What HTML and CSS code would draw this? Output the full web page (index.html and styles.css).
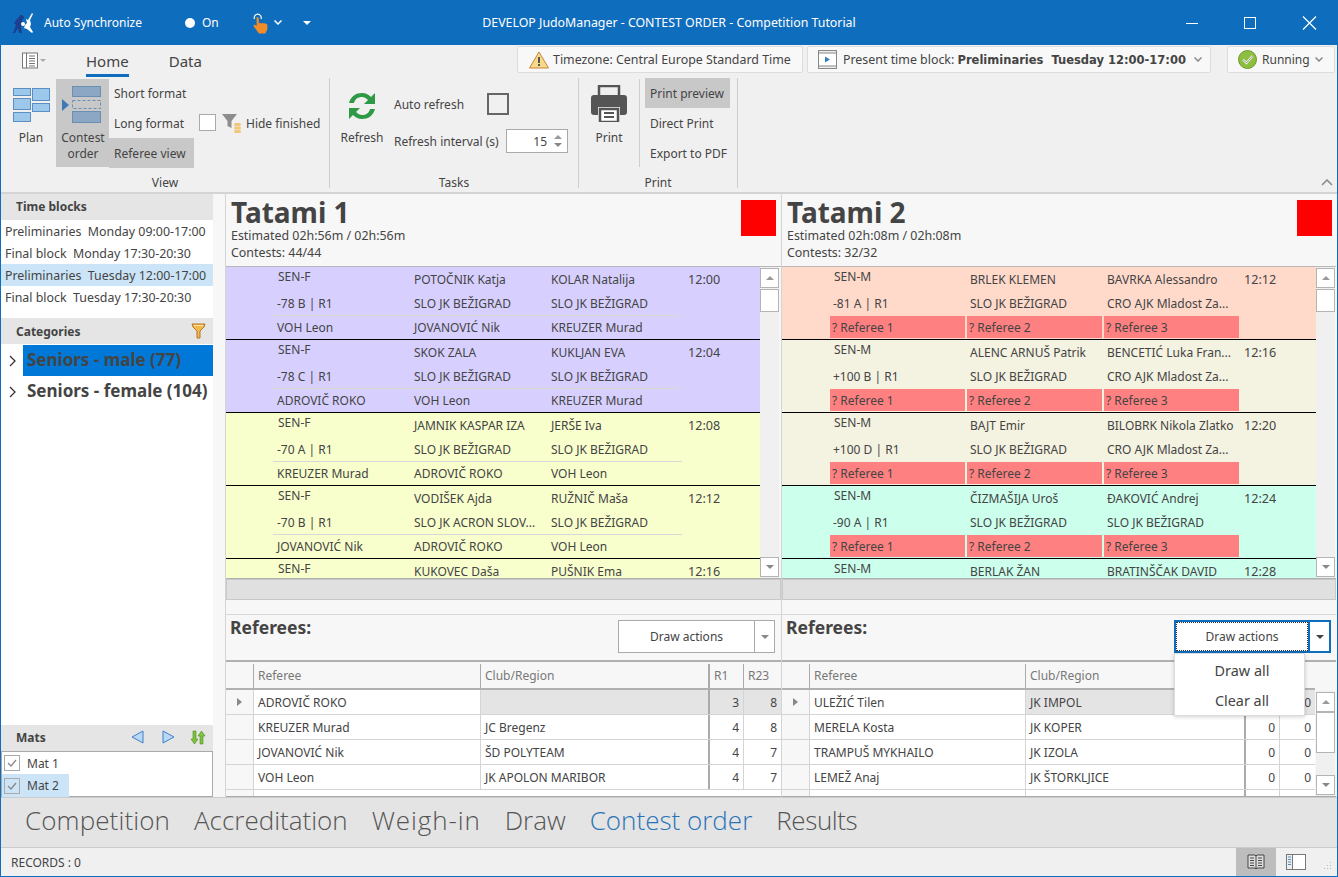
FILE: index.html
```html
<!DOCTYPE html>
<html lang="en">
<head>
<meta charset="utf-8">
<title>JudoManager</title>
<link rel="stylesheet" href="styles.css">
</head>
<body>
<div class="window">
  <header class="titlebar">
    <div class="tb-left">
      <svg class="logo" viewBox="0 0 22 22" width="22" height="22"><path d="M7 5a2.500 2.500 0 1 1 3 3l1 3-2 4 1 6H7l-1-5-3 5H1l3-8-2-2 3-4z" fill="#1d3f8f"/><path d="M20 1l1 1-3 6 1 4-1 3 3 5-1 1-5-4-3-1 1-3 2-2-1-4 2 1z" fill="#fff"/><circle cx="11" cy="12" r="2" fill="#fff"/></svg>
      <span class="tb-sync">Auto Synchronize</span>
      <span class="tb-dot"></span><span class="tb-on">On</span>
      <svg class="tb-hand" viewBox="0 0 18 22" width="18" height="22"><path d="M2.500 7a3.500 3.500 0 1 1 6.500 0" fill="none" stroke="#fff" stroke-width="1.200"/><path d="M4.500 5.500c1.200-.8 2.300 0 2.300 1.200v4.800l1.500-.7 1.200.6 1.300-.5 1.200.7 1.300-.3 2 1.300v5l-2 4H7l-5.500-7.500c0-1.500 1.500-1.700 2.600-.7l.6.700z" fill="#f28c28"/></svg>
      <svg class="tb-chev" viewBox="0 0 8 5" width="8" height="5"><path d="M.5.500 4 4 7.500.500" fill="none" stroke="#fff" stroke-width="1.500"/></svg>
      <span class="tb-caret"></span>
    </div>
    <div class="tb-title">DEVELOP JudoManager - CONTEST ORDER - Competition Tutorial</div>
    <div class="tb-controls">
      <svg viewBox="0 0 12 12" width="12" height="12"><path d="M0 6.500h12" stroke="#fff"/></svg>
      <svg viewBox="0 0 12 12" width="12" height="12"><rect x=".5" y=".5" width="11" height="11" fill="none" stroke="#fff"/></svg>
      <svg viewBox="0 0 15 14" width="15" height="14"><path d="M1 .5l13 13M14 .5l-13 13" stroke="#fff" stroke-width="1.200"/></svg>
    </div>
  </header>

  <section class="ribbon">
    <div class="rb-top">
      <svg class="rb-menu" viewBox="0 0 26 17" width="26" height="17"><rect x="1.500" y="1" width="15" height="15" fill="#fff" stroke="#777"/><path d="M5.500 1v15" stroke="#777"/><path d="M8 4h6M8 6.500h6M8 9h6M8 11.500h6M8 14h6" stroke="#777"/><path d="M19 7h6l-3 3z" fill="#aaa"/></svg>
      <div class="rb-tab rb-tab-on">Home</div>
      <div class="rb-tab">Data</div>
      <div class="rb-status">
        <div class="rb-pill rb-tz">
          <svg viewBox="0 0 20 18" width="20" height="18"><path d="M10 1 19.500 17H.5z" fill="#f7d98a" stroke="#c9843a"/><path d="M10 6v6" stroke="#555" stroke-width="2"/><path d="M10 13v2" stroke="#555" stroke-width="2"/></svg>
          <span>Timezone: Central Europe Standard Time</span>
        </div>
        <div class="rb-pill rb-block">
          <svg viewBox="0 0 19 19" width="19" height="19"><rect x=".5" y=".5" width="18" height="18" fill="#eee" stroke="#888"/><rect x=".5" y="3" width="18" height="13" fill="#fff" stroke="#888"/><path d="M7 6.500v6l5-3z" fill="#3a7cc0"/></svg>
          <span>Present time block: <b>Preliminaries&nbsp; Tuesday 12:00-17:00</b></span>
          <svg class="chev" viewBox="0 0 8 5" width="8" height="5"><path d="M.5.500 4 4 7.500.500" fill="none" stroke="#888" stroke-width="1.500"/></svg>
        </div>
        <div class="rb-pill rb-run">
          <svg viewBox="0 0 19 19" width="19" height="19"><circle cx="9.500" cy="9.500" r="9" fill="#8cbf3f" stroke="#6c9a2a"/><path d="M5 9.500l3.500 3.500 6-7" fill="none" stroke="#fff" stroke-width="2"/><path d="M5 9.500l3.500 3.500 6-7" fill="none" stroke="#666" stroke-width=".7"/></svg>
          <span>Running</span>
          <svg class="chev" viewBox="0 0 8 5" width="8" height="5"><path d="M.5.500 4 4 7.500.500" fill="none" stroke="#888" stroke-width="1.500"/></svg>
        </div>
      </div>
    </div>
    <div class="rb-groups">
      <div class="rb-group g-view">
        <div class="rb-items">
          <div class="rb-large b-plan">
            <svg viewBox="0 0 37 34" width="37" height="34"><g fill="#9cc8ec" stroke="#5b8fc4"><rect x=".5" y=".5" width="17" height="7"/><rect x=".5" y="10.500" width="17" height="11"/><rect x=".5" y="24.500" width="17" height="9"/><rect x="19.500" y=".5" width="17" height="12"/><rect x="19.500" y="15.500" width="17" height="8"/></g></svg>
            <span>Plan</span>
          </div>
          <div class="rb-large b-order">
            <svg viewBox="0 0 42 37" width="42" height="37"><path d="M0 13l7 6-7 6z" fill="#3f7ab5"/><g fill="#8ba7c4" stroke="#6b8fb3"><rect x="10.500" y=".5" width="28" height="10"/><rect x="10.500" y="25.500" width="28" height="11"/></g><rect x="10.500" y="14.500" width="28" height="8" fill="none" stroke="#6b8fb3" stroke-dasharray="3 2"/></svg>
            <span>Contest<br>order</span>
          </div>
          <div class="rb-small-col c-format">
            <div class="rb-small">Short format</div>
            <div class="rb-small">Long format</div>
            <div class="rb-small is-on">Referee view</div>
          </div>
          <div class="hide-finished">
            <span class="chk"></span>
            <svg viewBox="0 0 20 20" width="20" height="20"><path d="M0 1h15l-5.500 7v7l-4-2V8z" fill="#8d8d8d"/><rect x="12" y="10" width="7" height="3" rx="1.500" fill="#f2c777"/><rect x="12" y="13.500" width="7" height="3" rx="1.500" fill="#f2c777"/><rect x="12" y="17" width="7" height="3" rx="1.500" fill="#f2c777"/></svg>
            <span>Hide finished</span>
          </div>
        </div>
        <div class="rb-glabel">View</div>
      </div>
      <div class="rb-group g-tasks">
        <div class="rb-items">
          <div class="rb-large b-refresh">
            <svg viewBox="0 0 32 32" width="32" height="32"><path d="M3 13C5 6 10 3 16 3c4 0 7 2 9 4l4-4v11H18l4-4c-2-2-4-3-6-3-4 0-7 2-8 6z" fill="#2f9a46"/><path d="M29 19c-2 7-7 10-13 10-4 0-7-2-9-4l-4 4V18h11l-4 4c2 2 4 3 6 3 4 0 7-2 8-6z" fill="#2f9a46"/></svg>
            <span>Refresh</span>
          </div>
          <div class="task-form">
            <div class="task-row1"><span>Auto refresh</span><span class="chk-big"></span></div>
            <div class="task-row2"><span>Refresh interval (s)</span>
              <span class="spin"><span class="spin-val">15</span><span class="spin-btns"><i class="up"></i><i class="down"></i></span></span>
            </div>
          </div>
        </div>
        <div class="rb-glabel">Tasks</div>
      </div>
      <div class="rb-group g-print">
        <div class="rb-items">
          <div class="rb-large b-print">
            <svg viewBox="0 0 36 37" width="36" height="37"><path d="M8 1h20v11H8z" fill="none" stroke="#555" stroke-width="2.500"/><path d="M3 10h30a3 3 0 0 1 3 3v14a3 3 0 0 1-3 3h-4v-8H7v8H3a3 3 0 0 1-3-3V13a3 3 0 0 1 3-3z" fill="#555"/><rect x="9" y="24" width="18" height="13" fill="#fff" stroke="#555" stroke-width="2.500"/><path d="M13 28h10M13 32h10" stroke="#555" stroke-width="2"/></svg>
            <span>Print</span>
          </div>
          <div class="print-sep"></div>
          <div class="rb-small-col c-print">
            <div class="rb-small is-on">Print preview</div>
            <div class="rb-small">Direct Print</div>
            <div class="rb-small">Export to PDF</div>
          </div>
        </div>
        <div class="rb-glabel">Print</div>
      </div>
      <div class="rb-rest"><svg viewBox="0 0 12 7" width="12" height="7"><path d="M1 6l5-5 5 5" fill="none" stroke="#888" stroke-width="1.500"/></svg></div>
    </div>
  </section>

  <main class="main">
    <aside class="side">
      <div class="side-head head-up">Time blocks</div>
      <ul class="blocks">
        <li>Preliminaries&nbsp; Monday 09:00-17:00</li>
        <li>Final block&nbsp; Monday 17:30-20:30</li>
        <li class="sel">Preliminaries&nbsp; Tuesday 12:00-17:00</li>
        <li>Final block&nbsp; Tuesday 17:30-20:30</li>
      </ul>
      <div class="side-head head-cat">Categories
        <svg viewBox="0 0 15 16" width="15" height="16"><path d="M1 1h13l-1 3-4 4v7H6V8L2 4z" fill="#f2b84b" stroke="#b5752a"/><path d="M3 2.500h9" stroke="#fbe6a8"/></svg>
      </div>
      <div class="cats">
        <div class="cat-row"><svg viewBox="0 0 8 12" width="8" height="12"><path d="M1 1l5 5-5 5" fill="none" stroke="#333" stroke-width="1.300"/></svg><span class="cat-name cat-sel">Seniors - male (77)</span></div>
        <div class="cat-row"><svg viewBox="0 0 8 12" width="8" height="12"><path d="M1 1l5 5-5 5" fill="none" stroke="#333" stroke-width="1.300"/></svg><span class="cat-name">Seniors - female (104)</span></div>
      </div>
      <div class="side-head head-up">Mats
        <span class="mat-icons">
          <svg class="mat-prev" viewBox="0 0 13 14" width="13" height="14"><path d="M12 1v12L1 7z" fill="#b9d8f5" stroke="#3f80c8"/></svg>
          <svg viewBox="0 0 13 14" width="13" height="14"><path d="M1 1v12l11-6z" fill="#b9d8f5" stroke="#3f80c8"/></svg>
          <svg viewBox="0 0 16 15" width="16" height="15"><path d="M4.500 14 1 9h2V1h3v8h2z" fill="#7ec23f" stroke="#4d8a1f" stroke-width=".6"/><path d="M11.500 1 15 6h-2v8h-3V6H8z" fill="#7ec23f" stroke="#4d8a1f" stroke-width=".6"/></svg>
        </span>
      </div>
      <div class="mats">
        <div class="mat"><span class="mat-chk"><svg viewBox="0 0 12 12" width="12" height="12"><path d="M2 6l3 3 5-6" fill="none" stroke="#888" stroke-width="1.300"/></svg></span><span>Mat 1</span></div>
        <div class="mat mat-on"><span class="mat-chk"><svg viewBox="0 0 12 12" width="12" height="12"><path d="M2 6l3 3 5-6" fill="none" stroke="#888" stroke-width="1.300"/></svg></span><span>Mat 2</span></div>
      </div>
    </aside>

    <div class="tatamis">
      <section class="tatami t1">
        <div class="t-head">
          <div class="t-info"><h2>Tatami 1</h2><p>Estimated 02h:56m / 02h:56m</p><p>Contests: 44/44</p></div>
          <div class="t-flag"></div>
        </div>
        <div class="t-grid">
          <div class="contests">
            <div class="contest violet">
              <span class="c-cat">SEN-F</span><span>POTOČNIK Katja</span><span>KOLAR Natalija</span><span class="time">12:00</span>
              <span>-78 B | R1</span><span>SLO JK BEŽIGRAD</span><span>SLO JK BEŽIGRAD</span><span></span>
              <span class="r3">VOH Leon</span><span class="r3">JOVANOVIĆ Nik</span><span class="r3 r3-end">KREUZER Murad</span><span></span>
            </div>
            <div class="contest violet">
              <span class="c-cat">SEN-F</span><span>SKOK ZALA</span><span>KUKLJAN EVA</span><span class="time">12:04</span>
              <span>-78 C | R1</span><span>SLO JK BEŽIGRAD</span><span>SLO JK BEŽIGRAD</span><span></span>
              <span class="r3">ADROVIČ ROKO</span><span class="r3">VOH Leon</span><span class="r3 r3-end">KREUZER Murad</span><span></span>
            </div>
            <div class="contest yellow">
              <span class="c-cat">SEN-F</span><span>JAMNIK KASPAR IZA</span><span>JERŠE Iva</span><span class="time">12:08</span>
              <span>-70 A | R1</span><span>SLO JK BEŽIGRAD</span><span>SLO JK BEŽIGRAD</span><span></span>
              <span class="r3">KREUZER Murad</span><span class="r3">ADROVIČ ROKO</span><span class="r3 r3-end">VOH Leon</span><span></span>
            </div>
            <div class="contest yellow">
              <span class="c-cat">SEN-F</span><span>VODIŠEK Ajda</span><span>RUŽNIČ Maša</span><span class="time">12:12</span>
              <span>-70 B | R1</span><span>SLO JK ACRON SLOV...</span><span>SLO JK BEŽIGRAD</span><span></span>
              <span class="r3">JOVANOVIĆ Nik</span><span class="r3">ADROVIČ ROKO</span><span class="r3 r3-end">VOH Leon</span><span></span>
            </div>
            <div class="contest yellow">
              <span class="c-cat">SEN-F</span><span>KUKOVEC Daša</span><span>PUŠNIK Ema</span><span class="time">12:16</span>
            </div>
          </div>
          <div class="vscroll"><div class="sb-btn"><i class="up"></i></div><div class="sb-thumb"></div><div class="sb-track"></div><div class="sb-btn"><i class="down"></i></div></div>
        </div>
        <div class="t-hbar"></div>
        <div class="t-gap"></div>
        <div class="ref-head">
          <div class="ref-title">Referees:</div>
          <div class="split"><span class="split-main">Draw actions</span><span class="split-arrow"><i class="down"></i></span></div>
        </div>
        <div class="ref-table">
          <div class="rt-row rt-header"><span class="rt-ind"></span><span>Referee</span><span>Club/Region</span><span class="num-h">R1</span><span class="h-last">R23</span></div>
          <div class="rt-row cur"><span class="rt-ind"><i class="ptr"></i></span><span class="focus">ADROVIČ ROKO</span><span></span><span class="num">3</span><span class="num">8</span></div>
          <div class="rt-row"><span class="rt-ind"></span><span>KREUZER Murad</span><span>JC Bregenz</span><span class="num">4</span><span class="num">8</span></div>
          <div class="rt-row"><span class="rt-ind"></span><span>JOVANOVIĆ Nik</span><span>ŠD POLYTEAM</span><span class="num">4</span><span class="num">7</span></div>
          <div class="rt-row"><span class="rt-ind"></span><span>VOH Leon</span><span>JK APOLON MARIBOR</span><span class="num">4</span><span class="num">7</span></div>
          <div class="rt-row rt-empty"><span class="rt-ind"></span><span></span></div>
        </div>
      </section>

      <section class="tatami t2">
        <div class="t-head">
          <div class="t-info"><h2>Tatami 2</h2><p>Estimated 02h:08m / 02h:08m</p><p>Contests: 32/32</p></div>
          <div class="t-flag"></div>
        </div>
        <div class="t-grid">
          <div class="contests">
            <div class="contest salmon">
              <span class="c-cat">SEN-M</span><span>BRLEK KLEMEN</span><span>BAVRKA Alessandro</span><span class="time">12:12</span>
              <span>-81 A | R1</span><span>SLO JK BEŽIGRAD</span><span>CRO AJK Mladost Za...</span><span></span>
              <span class="rq">? Referee 1</span><span class="rq">? Referee 2</span><span class="rq">? Referee 3</span><span></span>
            </div>
            <div class="contest beige">
              <span class="c-cat">SEN-M</span><span>ALENC ARNUŠ Patrik</span><span>BENCETIĆ Luka Fran...</span><span class="time">12:16</span>
              <span>+100 B | R1</span><span>SLO JK BEŽIGRAD</span><span>CRO AJK Mladost Za...</span><span></span>
              <span class="rq">? Referee 1</span><span class="rq">? Referee 2</span><span class="rq">? Referee 3</span><span></span>
            </div>
            <div class="contest beige">
              <span class="c-cat">SEN-M</span><span>BAJT Emir</span><span>BILOBRK Nikola Zlatko</span><span class="time">12:20</span>
              <span>+100 D | R1</span><span>SLO JK BEŽIGRAD</span><span>CRO AJK Mladost Za...</span><span></span>
              <span class="rq">? Referee 1</span><span class="rq">? Referee 2</span><span class="rq">? Referee 3</span><span></span>
            </div>
            <div class="contest mint">
              <span class="c-cat">SEN-M</span><span>ČIZMAŠIJA Uroš</span><span>ĐAKOVIĆ Andrej</span><span class="time">12:24</span>
              <span>-90 A | R1</span><span>SLO JK BEŽIGRAD</span><span>SLO JK BEŽIGRAD</span><span></span>
              <span class="rq">? Referee 1</span><span class="rq">? Referee 2</span><span class="rq">? Referee 3</span><span></span>
            </div>
            <div class="contest mint">
              <span class="c-cat">SEN-M</span><span>BERLAK ŽAN</span><span>BRATINŠČAK DAVID</span><span class="time">12:28</span>
            </div>
          </div>
          <div class="vscroll"><div class="sb-btn"><i class="up"></i></div><div class="sb-thumb"></div><div class="sb-track"></div><div class="sb-btn"><i class="down"></i></div></div>
        </div>
        <div class="t-hbar"></div>
        <div class="t-gap"></div>
        <div class="ref-head">
          <div class="ref-title">Referees:</div>
          <div class="split focused"><span class="split-main"><span class="split-dots">Draw actions</span></span><span class="split-arrow"><i class="down dark"></i></span></div>
        </div>
        <div class="ref-table rt2">
          <div class="rt-row rt-header"><span class="rt-ind"></span><span>Referee</span><span>Club/Region</span><span class="num-h">R1</span><span class="h-last">R23</span></div>
          <div class="rt-row cur"><span class="rt-ind"><i class="ptr"></i></span><span class="focus">ULEŽIĆ Tilen</span><span>JK IMPOL</span><span class="num">0</span><span class="num">0</span></div>
          <div class="rt-row"><span class="rt-ind"></span><span>MERELA Kosta</span><span>JK KOPER</span><span class="num">0</span><span class="num">0</span></div>
          <div class="rt-row"><span class="rt-ind"></span><span>TRAMPUŠ MYKHAILO</span><span>JK IZOLA</span><span class="num">0</span><span class="num">0</span></div>
          <div class="rt-row"><span class="rt-ind"></span><span>LEMEŽ Anaj</span><span>JK ŠTORKLJICE</span><span class="num">0</span><span class="num">0</span></div>
          <div class="rt-row rt-fifth"><span class="rt-ind"></span><span></span><span></span><span></span><span></span></div>
          <div class="vscroll rt-scroll"><div class="sb-btn"><i class="up"></i></div><div class="sb-thumb"></div><div class="sb-track"></div><div class="sb-btn"><i class="down"></i></div></div>
        </div>
        <div class="menu"><div>Draw all</div><div>Clear all</div></div>
      </section>
    </div>
  </main>

  <nav class="nav">
    <span class="nav-c">Competition</span><span>Accreditation</span><span class="nav-w">Weigh-in</span><span>Draw</span><span class="nav-on">Contest order</span><span class="nav-r">Results</span>
  </nav>

  <footer class="status">
    <span class="records">RECORDS : 0</span>
    <span class="st-btn st-on"><svg viewBox="0 0 18 16" width="18" height="16"><path d="M1 1h7l1 1 1-1h7v13h-7l-1 1-1-1H1z" fill="#ddd" stroke="#444"/><path d="M9 2v12M3 4h4M3 6.500h4M3 9h4M3 11.500h4M11 4h4M11 6.500h4M11 9h4M11 11.500h4" stroke="#444"/></svg></span>
    <span class="st-btn"><svg viewBox="0 0 20 16" width="20" height="16"><rect x=".5" y=".5" width="19" height="15" fill="#fff" stroke="#777"/><rect x=".5" y=".5" width="6" height="15" fill="#eee" stroke="#777"/><path d="M2 3h3M2 5.500h3M2 8h3M2 10.500h3" stroke="#4a8cd0"/></svg></span>
    <svg class="grip" viewBox="0 0 12 12" width="12" height="12"><path d="M10 2h1v1h-1zM7 5h1v1H7zM10 5h1v1h-1zM4 8h1v1H4zM7 8h1v1H7zM10 8h1v1h-1z" fill="#bbb"/></svg>
  </footer>
</div>
</body>
</html>
```
FILE: styles.css
```css
* { box-sizing: border-box; }
html, body { margin: 0; padding: 0; }
body { font-family: "Noto Sans", "DejaVu Sans", sans-serif; font-size: 12px; color: #444; }
ul { list-style: none; margin: 0; padding: 0; }
svg { display: block; flex: none; }

.window { width: 1338px; height: 877px; display: flex; flex-direction: column; border: 1px solid #0f6dbd; border-top: 0; background: #f0f0f0; overflow: hidden; }

/* title bar */
.titlebar { height: 45px; margin: 0 -1px; background: #0f6dbd; color: #fff; display: grid; grid-template-columns: 1fr auto 1fr; align-items: center; flex: none; }
.tb-left { display: flex; align-items: center; padding-left: 12px; }
.tb-sync { margin-left: 10px; width: 141px; }
.tb-dot { width: 10px; height: 10px; border-radius: 50%; background: #fff; }
.tb-on { margin-left: 7px; width: 42px; }
.tb-hand { margin-left: 8px; }
.tb-chev { margin-left: 4px; }
.tb-caret { margin-left: 21px; width: 0; height: 0; border: 4px solid transparent; border-top-color: #fff; border-bottom: 0; }
.tb-title { font-size: 12.36px; }
.tb-controls { display: flex; justify-content: flex-end; align-items: center; gap: 46px; padding-right: 21px; }

/* ribbon */
.ribbon { height: 149px; flex: none; border-bottom: 2px solid #d4d4d4; display: flex; flex-direction: column; }
.rb-top { height: 33px; display: flex; align-items: center; flex: none; padding-left: 20px; }
.rb-menu { margin-right: 39px; margin-top: -2px; }
.rb-tab { font-size: 15px; height: 30px; line-height: 28px; margin-right: 40px; }
.rb-tab-on { border-bottom: 3px solid #0f6dbd; }
.rb-status { margin-left: auto; display: flex; gap: 4px; align-self: flex-start; padding: 1px 2px 0 0; }
.rb-pill { height: 27px; display: flex; align-items: center; gap: 6px; background: #f8f8f8; border: 1px solid #dcdcdc; border-radius: 2px; padding: 0 8px 0 10px; white-space: nowrap; font-size: 12.4px; }
.rb-tz { width: 286px; padding-left: 11px; gap: 4px; }
.rb-block { width: 404px; }
.rb-block b { font-family: "DejaVu Sans", sans-serif; font-size: 11.5px; }
.rb-block .chev { margin-left: auto; }
.rb-run { width: 108px; margin-left: 12px; font-size: 12px; gap: 5px; }
.rb-groups { flex: 1; display: flex; min-height: 0; }
.rb-group { display: flex; flex-direction: column; border-right: 1px solid #cfcfcf; margin-bottom: 4px; }
.g-view { width: 329px; }
.g-tasks { width: 249px; }
.g-print { width: 159px; }
.rb-items { height: 94px; display: flex; flex: none; }
.rb-glabel { text-align: center; height: 20px; line-height: 22px; }
.rb-rest { flex: 1; display: flex; justify-content: flex-end; align-items: flex-end; padding: 0 4px 6px 0; }
.rb-large { display: flex; flex-direction: column; align-items: center; text-align: center; line-height: 15px; }
.b-plan { width: 38px; margin-left: 11px; padding-top: 10px; }
.b-plan span { margin-top: 8px; }
.b-order { width: 53px; margin-left: 6px; background: #c8c8c8; padding: 7px 0 0 6px; margin-top: 1px; height: 88px; align-items: flex-start; }
.b-order span { margin: 7px 0 0 -5px; width: 52px; line-height: 16px; }
.rb-small-col { display: flex; flex-direction: column; }
.rb-small { height: 30px; line-height: 32px; padding-left: 5px; }
.rb-small.is-on { background: #c8c8c8; }
.c-format { width: 85px; }
.hide-finished { display: flex; align-items: center; height: 30px; margin-top: 30px; margin-left: 5px; }
.chk { width: 17px; height: 17px; background: #fff; border: 1px solid #aaa; margin: 0 6px 2px 0; }
.hide-finished svg { margin-right: 4px; }
.b-refresh { width: 44px; margin-left: 10px; padding-top: 12px; }
.b-refresh span { margin-top: 8px; }
.task-form { margin-left: 10px; padding-top: 14px; }
.task-row1 { display: flex; align-items: center; height: 24px; }
.task-row1 span:first-child { width: 93px; }
.chk-big { width: 22px; height: 22px; border: 2px solid #666; }
.task-row2 { display: flex; align-items: center; height: 24px; margin-top: 13px; }
.task-row2 > span:first-child { width: 112px; }
.spin { width: 62px; height: 24px; background: #fff; border: 1px solid #aaa; display: flex; align-items: center; justify-content: flex-end; }
.spin-val { margin-right: 7px; }
.spin-btns { display: flex; flex-direction: column; gap: 4px; margin-right: 5px; }
.up, .down { display: block; width: 0; height: 0; border-style: solid; border-color: transparent; }
.up { border-width: 0 4px 4px; border-bottom-color: #999; }
.down { border-width: 4px 4px 0; border-top-color: #888; }
.down.dark { border-top-color: #444; }
.b-print { width: 36px; margin-left: 12px; padding-top: 7px; }
.b-print span { margin-top: 8px; }
.print-sep { width: 1px; height: 88px; background: #cfcfcf; margin: 1px 5px 0 12px; }
.c-print { width: 85px; }

/* main */
.main { flex: none; height: 603px; display: flex; background: #f7f7f7; }
.side { width: 212px; flex: none; display: flex; flex-direction: column; background: #fff; }
.side-head { height: 26px; flex: none; background: #e5e5e5; font-weight: 700; padding-left: 15px; line-height: 25px; display: flex; align-items: center; justify-content: space-between; padding-right: 7px; }
.head-up { padding-bottom: 2px; }
.blocks { margin-bottom: 10px; font-size: 12.4px; }
.blocks li { height: 22px; line-height: 23px; padding-left: 4px; white-space: nowrap; }
.blocks li.sel { background: #cce4f7; }
.cats { flex: 1; padding-top: 1px; }
.cat-row { height: 31px; display: flex; align-items: center; padding-left: 8px; }
.cat-name { margin-left: 6px; height: 31px; flex: 1; font-size: 17px; font-weight: 700; line-height: 30px; padding-left: 4px; white-space: nowrap; }
.cat-sel { background: #0078d7; }
.mat-icons { display: flex; gap: 15px; align-items: center; }
.mat-prev { margin-right: 3px; }
.mats { height: 46px; flex: none; border: 1px solid #aaa; background: #fff; }
.mat { height: 22px; width: 67px; display: flex; align-items: center; padding-left: 2px; gap: 7px; }
.mat-on { background: #cce4f7; height: 23px; }
.mat-chk { width: 16px; height: 16px; border: 1px solid #aaa; display: flex; align-items: center; justify-content: center; flex: none; background: #fff; }
.mat-on .mat-chk { background: #cce4f7; }

.tatamis { margin-left: 12px; flex: 1; display: grid; grid-template-columns: 556px 555px; grid-template-rows: 603px; }
.tatami { position: relative; display: flex; flex-direction: column; border-left: 1px solid #d4d4d4; min-width: 0; min-height: 0; }
.t-head { height: 73px; flex: none; display: flex; justify-content: space-between; padding: 4px 4px 0 5px; border-bottom: 1px solid #b8b8b8; }
.t1 .t-head { padding-right: 5px; }
.t-info h2 { margin: 0; font-size: 28px; line-height: 29px; font-weight: 700; color: #444; }
.t-info p { margin: 0; line-height: 17px; font-size: 12.4px; }
.t-flag { width: 35px; height: 36px; background: #ff0000; margin-top: 2px; }
.t-grid { height: 312px; flex: none; display: flex; overflow: hidden; border-bottom: 1px solid #b0b0b0; }
.contests { flex: 1; overflow: hidden; min-width: 0; }
.contest { height: 73px; padding-left: 49px; display: grid; grid-template-columns: 137px 137px 137px 1fr; grid-auto-rows: 24px; border-bottom: 1px solid #000; color: #444; }
.contest > span { padding-left: 2px; line-height: 26px; white-space: nowrap; overflow: hidden; }
.contest > .time { font-size: 12.6px; }
.contest > .c-cat { line-height: 20px; padding-left: 3px; }
.contest > .r3 { border-top: 1px solid #d8d8d8; line-height: 23px; margin-left: -2px; padding-left: 4px; }
.contest > .r3-end { margin-right: 4px; }
.contest > .rq { background: #ff8080; margin: 1px 3px 1px -1px; line-height: 23px; padding-left: 2px; }
.violet { background: #d7d0ff; }
.yellow { background: #f8ffcc; }
.salmon { background: #ffdacb; }
.beige { background: #f4f2e0; }
.mint { background: #ccffec; }
.vscroll { width: 19px; flex: none; background: #f0f0f0; display: flex; flex-direction: column; padding: 1px 0; }
.t1 .t-grid .vscroll { margin-right: 2px; }
.t2 .t-grid .vscroll { margin-right: 1px; }
.sb-btn { height: 20px; flex: none; background: #fff; border: 1px solid #b4b4b4; display: flex; align-items: center; justify-content: center; }
.sb-thumb { height: 23px; flex: none; background: #fff; border: 1px solid #b4b4b4; margin-top: 1px; }
.sb-track { flex: 1; }
.t-hbar { height: 21px; flex: none; margin: 0; background: #e0e0e0; border: 1px solid #c8c8c8; border-top: 0; box-shadow: inset 0 1px 0 #c8c8c8; }
.t-gap { height: 14px; flex: none; }
.ref-head { height: 46px; flex: none; display: flex; justify-content: space-between; border-top: 1px solid #d8d8d8; padding: 5px 5px 0 4px; }
.t1 .ref-head { padding-right: 6px; }
.ref-title { font-size: 17.5px; font-weight: 700; line-height: 22px; margin-top: -4px; }
.split { width: 157px; height: 33px; display: flex; background: #fff; border: 1px solid #aaa; }
.split-main { flex: 1; display: flex; align-items: center; justify-content: center; border-right: 1px solid #aaa; }
.split-arrow { width: 19px; display: flex; align-items: center; justify-content: center; }
.split.focused { border: 2px solid #0f6dbd; }
.split.focused .split-main { border-right: 2px solid #0f6dbd; }
.split-dots { display: flex; align-items: center; justify-content: center; width: 100%; height: 100%; border: 1px dotted #333; }
.ref-table { flex: 1; position: relative; overflow: hidden; border-top: 2px solid #b0b0b0; border-bottom: 1px solid #aaa; background: #f7f7f7; min-height: 0; }
.rt-row { display: grid; grid-template-columns: 27px 227px 228px 35px 1fr; height: 25px; background: #fff; border-bottom: 1px solid #d4d4d4; }
.rt2 .rt-row { grid-template-columns: 27px 216px 219px 35px 36px; width: 533px; }
.rt-row > span { padding: 0 4px; line-height: 26px; white-space: nowrap; overflow: hidden; border-left: 1px solid #d4d4d4; }
.rt-row > .rt-ind { background: #f7f7f7; border-left: 0; display: flex; align-items: center; justify-content: center; }
.rt-row > .num { text-align: right; padding-right: 4px; }
.rt-row > span:nth-child(4) { border-left: 2px solid #aaa; }
.rt-header { height: 28px; background: #f7f7f7; border-bottom: 2px solid #b0b0b0; color: #777; }
.rt-row.rt-header > span { background: #f7f7f7; line-height: 23px; border-left: 1px solid #aaa; margin: 2px 0 0; height: 24px; }
.rt-row.rt-header > .rt-ind { height: 26px; margin: 0; border-left: 0; }
.rt-row.rt-header > .num-h { border-left: 2px solid #aaa; }
.cur > span { background: #e4e4e4; }
.cur > .focus { background: #fff; }
.ptr { display: block; width: 0; height: 0; border-style: solid; border-width: 4px 0 4px 5px; border-color: transparent transparent transparent #888; }
.rt-scroll { position: absolute; right: 1px; top: 29px; bottom: 0; }
.rt-scroll .sb-thumb { height: 41px; margin-top: 0; }
.menu { position: absolute; left: 392px; top: 459px; width: 131px; height: 63px; background: #fff; border: 1px solid #dcdcdc; box-shadow: 0 1px 4px rgba(0,0,0,.18); padding: 2px 0 0 5px; text-align: center; font-size: 14.4px; }
.menu div { height: 30px; line-height: 29px; }

/* nav */
.nav { height: 51px; flex: none; background: #e4e4e4; border-top: 1px solid #ccc; border-bottom: 1px solid #ccc; display: flex; gap: 24px; padding-left: 24px; font-family: "Open Sans", sans-serif; font-weight: 300; font-size: 26px; line-height: 44px; color: #555; white-space: nowrap; }
.nav-c { letter-spacing: .1px; }
.nav-w { letter-spacing: .9px; }
.nav-r { letter-spacing: -.4px; }
.nav-on { color: #2a73b8; }

/* status */
.status { flex: 1; display: flex; align-items: center; padding-left: 10px; min-height: 0; }
.records { margin-right: auto; }
.st-btn { width: 40px; height: 100%; display: flex; align-items: center; justify-content: center; }
.st-on { background: #bdbdbd; }
.grip { margin: 8px 5px 0 4px; }
```
